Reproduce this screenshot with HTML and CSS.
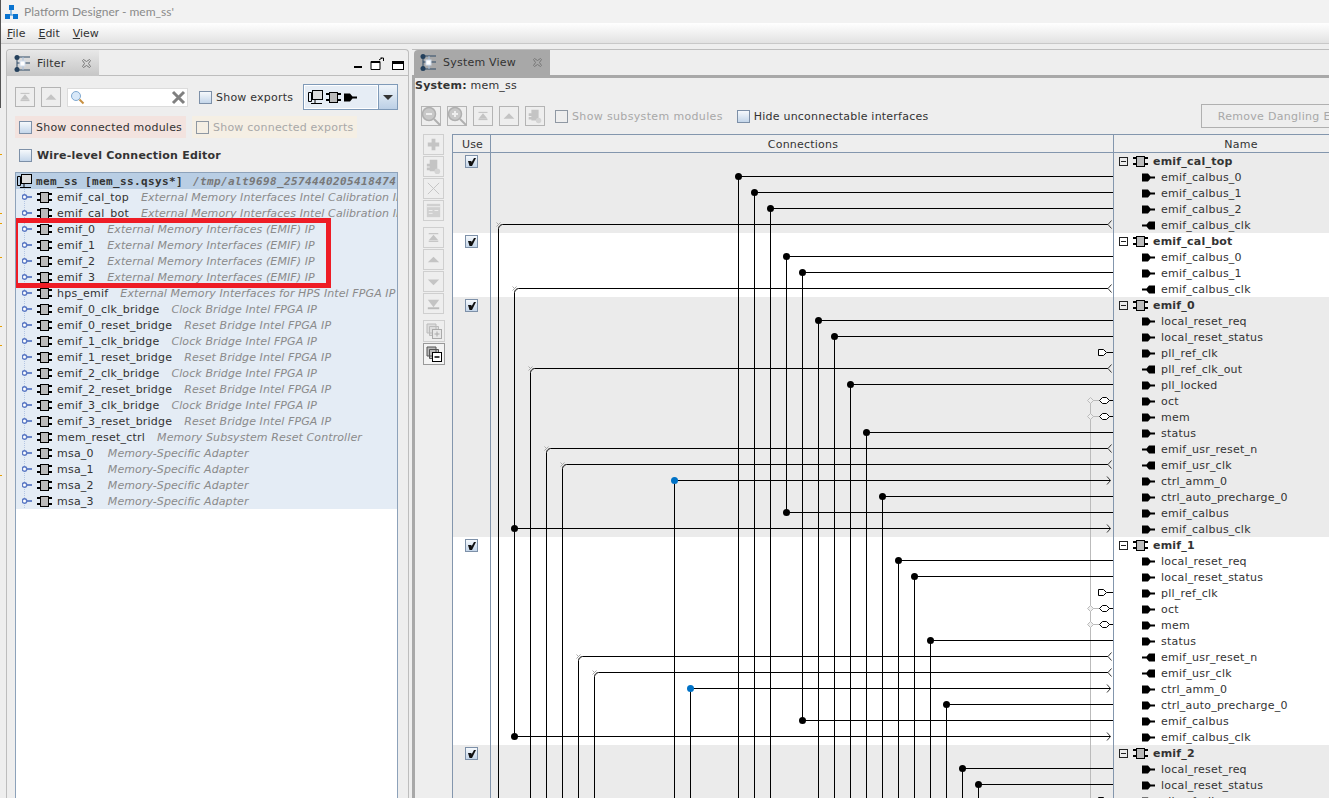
FILE: index.html
```html
<!DOCTYPE html>
<html lang="en">
<head>
  <meta charset="UTF-8" />
  <title>Platform Designer - mem_ss'</title>
  <link rel="stylesheet" href="styles.css">
</head>
<body>
  <svg class="defs" width="0" height="0">
    <symbol id="mod" viewBox="0 0 15 11">
      <path d="M0 2h4M0 8h4M11 2h4M11 8h4" stroke="#000" stroke-width="2"/>
      <rect x="3.500" y="0.500" width="8" height="10" fill="#bbb" stroke="#000"/>
    </symbol>
    <symbol id="pout" viewBox="0 0 13 9">
      <path d="M0 0.500h6l2.500 3h4.500v2h-4.500l-2.500 3h-6z" fill="#000"/>
    </symbol>
    <symbol id="pin" viewBox="0 0 13 9">
      <path d="M13 0.500h-6l-2.500 3h-4.500v2h4.500l2.500 3h6z" fill="#000"/>
    </symbol>
    <symbol id="conn" viewBox="0 0 16 16">
      <path d="M2.500 0v16" stroke="#b4c6e4" stroke-width="1" stroke-dasharray="1 1"/>
      <path d="M5 8h5" stroke="#6a86c8" stroke-width="2"/>
      <circle cx="2.500" cy="8" r="2.200" fill="#fff" stroke="#5a78c4" stroke-width="1.400"/>
    </symbol>
    <symbol id="minus" viewBox="0 0 9 9">
      <rect x="0.500" y="0.500" width="8" height="8" fill="none" stroke="#222"/>
      <path d="M2 4.500h5" stroke="#222"/>
    </symbol>
    <symbol id="tick" viewBox="0 0 11 11">
      <path d="M2 5h3.500v1.500l2.500-4.500h2l-4 8h-2.500z" fill="#111"/>
    </symbol>
    <symbol id="net" viewBox="0 0 17 17">
      <path d="M3 2v13M3 2h13M3 15h13M3 8h13M8 8v1" stroke="#2e4a66" fill="none"/>
      <path d="M9 2v13" stroke="#a9c0dc"/>
      <circle cx="3" cy="2.500" r="2.500" fill="#24405c"/>
      <circle cx="3" cy="14.500" r="2.500" fill="#24405c"/>
      <rect x="6" y="6" width="5" height="5" fill="#fff" stroke="#cfdcec"/>
    </symbol>
    <symbol id="cross" viewBox="0 0 11 11">
      <path d="M1.500 2.500l1-1 3 2 3-2 1 1-2 3 2 3-1 1-3-2-3 2-1-1 2-3z" fill="none" stroke="#777"/>
    </symbol>
    <symbol id="monitor" viewBox="0 0 15 15">
      <rect x="4.500" y="0.500" width="10" height="9" fill="#ddd" stroke="#000"/>
      <path d="M0.500 2.500h3v9h-3zM3 13.500h11M7 10v3" fill="none" stroke="#000"/>
    </symbol>
    <symbol id="glass" viewBox="0 0 20 20">
      <circle cx="8" cy="8" r="6.500" fill="#c8c8c8" stroke="#b0b0b0" stroke-width="1.500"/>
      <path d="M13 13l6 6" stroke="#b0b0b0" stroke-width="2"/>
      <path d="M5 8h6" stroke="#eee" stroke-width="2"/>
    </symbol>
    <symbol id="glassplus" viewBox="0 0 20 20">
      <circle cx="8" cy="8" r="6.500" fill="#c8c8c8" stroke="#b0b0b0" stroke-width="1.500"/>
      <path d="M13 13l6 6" stroke="#b0b0b0" stroke-width="2"/>
      <path d="M5 8h6M8 5v6" stroke="#eee" stroke-width="2"/>
    </symbol>
    <symbol id="top" viewBox="0 0 20 20">
      <path d="M5 6h10M5 14h10" stroke="#bbb"/>
      <path d="M10 7l5 6h-10z" fill="#c4c4c4"/>
    </symbol>
    <symbol id="up" viewBox="0 0 20 20">
      <path d="M10 7l6 6h-12z" fill="#c4c4c4"/>
    </symbol>
    <symbol id="down" viewBox="0 0 20 20">
      <path d="M10 14l-6-6h12z" fill="#c4c4c4"/>
    </symbol>
    <symbol id="bottom" viewBox="0 0 20 20">
      <path d="M4 15h12" stroke="#bbb" stroke-width="2"/>
      <path d="M10 14l-6-8h12z" fill="#c4c4c4"/>
    </symbol>
    <symbol id="chip" viewBox="0 0 20 20">
      <path d="M6 3h8v12h-8zM3 7h3v3h-3zM3 11h3v3h-3z" fill="#c4c4c4"/>
      <circle cx="14" cy="15" r="3" fill="#d4d4d4"/>
    </symbol>
    <symbol id="plus" viewBox="0 0 20 20">
      <path d="M10 4v12M4 10h12" stroke="#c4c4c4" stroke-width="4"/>
    </symbol>
    <symbol id="xthin" viewBox="0 0 20 20">
      <path d="M4 4l12 12M16 4l-12 12" stroke="#c4c4c4"/>
    </symbol>
    <symbol id="form" viewBox="0 0 20 20">
      <path d="M3 3h14v14h-14z" fill="#d0d0d0"/>
      <path d="M3 6h14M5 10h4M5 13h4M11 10h4" stroke="#eee"/>
    </symbol>
    <symbol id="stackplus" viewBox="0 0 20 20">
      <path d="M3 3h9v9h-9zM5.500 5.500h9v9h-9z" fill="#ddd" stroke="#bbb"/>
      <rect x="8.500" y="8.500" width="9" height="9" fill="#e8e8e8" stroke="#aaa"/>
      <path d="M10.500 13h5M13 10.500v5" stroke="#aaa"/>
    </symbol>
    <symbol id="stackminus" viewBox="0 0 20 20">
      <path d="M3 3h9v9h-9zM5.500 5.500h9v9h-9z" fill="#bbb" stroke="#555"/>
      <rect x="8.500" y="8.500" width="9" height="9" fill="#fff" stroke="#000"/>
      <path d="M10.500 13h5" stroke="#000" stroke-width="1.500"/>
    </symbol>
  </svg>

  <div class="edge"></div>
  <div class="edge-marks"></div>

  <header class="titlebar">
    <svg class="app-icon" width="16" height="14" viewBox="0 0 16 14">
      <path d="M7 4v6M2 10h12" stroke="#2d8ad8"/>
      <rect x="5" y="0" width="5" height="5" fill="#0a74d0"/>
      <rect x="1" y="9" width="5" height="5" fill="#0a74d0"/>
      <rect x="9" y="9" width="5" height="5" fill="#0a74d0"/>
    </svg>
    Platform Designer - mem_ss'
  </header>
  <nav class="menubar">
    <span><u>F</u>ile</span>
    <span><u>E</u>dit</span>
    <span><u>V</u>iew</span>
  </nav>

  <main class="workspace">
    <section class="filter-panel">
      <div class="tabstrip">
        <div class="tab">
          <svg width="17" height="17"><use href="#net"/></svg>
          <span>Filter</span>
          <svg class="tab-x" width="11" height="11"><use href="#cross"/></svg>
        </div>
        <div class="win-btns">
          <span class="win-min"></span>
          <svg width="15" height="13" viewBox="0 0 15 13"><path d="M1 4.500h9v8h-9zM1 5.500h9" fill="#fff" stroke="#000"/><path d="M9 3l3-2M10.500 1h3v3" fill="none" stroke="#000"/></svg>
          <span class="win-max"></span>
        </div>
      </div>

      <div class="filter-tools">
        <button class="tool"><svg width="18" height="18"><use href="#top"/></svg></button>
        <button class="tool"><svg width="18" height="18"><use href="#up"/></svg></button>
        <div class="search">
          <svg width="15" height="15" viewBox="0 0 15 15"><circle cx="6" cy="6" r="4.500" fill="#d8e8f8" stroke="#7fa8d0"/><path d="M9.500 9.500l4 4" stroke="#c89040" stroke-width="2"/></svg>
          <svg class="search-x" width="15" height="15" viewBox="0 0 15 15"><path d="M2 2l11 11M13 2l-11 11" stroke="#808080" stroke-width="3"/></svg>
        </div>
        <label class="opt opt-exports"><span class="check"></span>Show exports</label>
        <div class="combo">
          <div class="combo-value">
            <svg width="15" height="15"><use href="#monitor"/></svg>
            <svg width="15" height="11"><use href="#mod"/></svg>
            <svg width="13" height="9"><use href="#pout"/></svg>
          </div>
          <div class="combo-arrow"></div>
        </div>
      </div>

      <div class="chips">
        <label class="opt chip chip-modules"><span class="check"></span>Show connected modules</label>
        <label class="opt chip chip-exports off"><span class="check off"></span>Show connected exports</label>
      </div>

      <label class="opt wire-level"><span class="check"></span>Wire-level Connection Editor</label>

      <div class="tree">
        <div class="tree-root">
          <svg width="15" height="15"><use href="#monitor"/></svg>
          <b>mem_ss [mem_ss.qsys*]</b>
          <em>/tmp/alt9698_2574440205418474</em>
        </div>
        <ul class="tree-list">
          <li><svg class="c" width="16" height="16"><use href="#conn"/></svg><svg width="15" height="11"><use href="#mod"/></svg><span>emif_cal_top</span><i>External Memory Interfaces Intel Calibration IP</i></li>
          <li><svg class="c" width="16" height="16"><use href="#conn"/></svg><svg width="15" height="11"><use href="#mod"/></svg><span>emif_cal_bot</span><i>External Memory Interfaces Intel Calibration IP</i></li>
          <li><svg class="c" width="16" height="16"><use href="#conn"/></svg><svg width="15" height="11"><use href="#mod"/></svg><span>emif_0</span><i>External Memory Interfaces (EMIF) IP</i></li>
          <li><svg class="c" width="16" height="16"><use href="#conn"/></svg><svg width="15" height="11"><use href="#mod"/></svg><span>emif_1</span><i>External Memory Interfaces (EMIF) IP</i></li>
          <li><svg class="c" width="16" height="16"><use href="#conn"/></svg><svg width="15" height="11"><use href="#mod"/></svg><span>emif_2</span><i>External Memory Interfaces (EMIF) IP</i></li>
          <li><svg class="c" width="16" height="16"><use href="#conn"/></svg><svg width="15" height="11"><use href="#mod"/></svg><span>emif_3</span><i>External Memory Interfaces (EMIF) IP</i></li>
          <li><svg class="c" width="16" height="16"><use href="#conn"/></svg><svg width="15" height="11"><use href="#mod"/></svg><span>hps_emif</span><i>External Memory Interfaces for HPS Intel FPGA IP</i></li>
          <li><svg class="c" width="16" height="16"><use href="#conn"/></svg><svg width="15" height="11"><use href="#mod"/></svg><span>emif_0_clk_bridge</span><i>Clock Bridge Intel FPGA IP</i></li>
          <li><svg class="c" width="16" height="16"><use href="#conn"/></svg><svg width="15" height="11"><use href="#mod"/></svg><span>emif_0_reset_bridge</span><i>Reset Bridge Intel FPGA IP</i></li>
          <li><svg class="c" width="16" height="16"><use href="#conn"/></svg><svg width="15" height="11"><use href="#mod"/></svg><span>emif_1_clk_bridge</span><i>Clock Bridge Intel FPGA IP</i></li>
          <li><svg class="c" width="16" height="16"><use href="#conn"/></svg><svg width="15" height="11"><use href="#mod"/></svg><span>emif_1_reset_bridge</span><i>Reset Bridge Intel FPGA IP</i></li>
          <li><svg class="c" width="16" height="16"><use href="#conn"/></svg><svg width="15" height="11"><use href="#mod"/></svg><span>emif_2_clk_bridge</span><i>Clock Bridge Intel FPGA IP</i></li>
          <li><svg class="c" width="16" height="16"><use href="#conn"/></svg><svg width="15" height="11"><use href="#mod"/></svg><span>emif_2_reset_bridge</span><i>Reset Bridge Intel FPGA IP</i></li>
          <li><svg class="c" width="16" height="16"><use href="#conn"/></svg><svg width="15" height="11"><use href="#mod"/></svg><span>emif_3_clk_bridge</span><i>Clock Bridge Intel FPGA IP</i></li>
          <li><svg class="c" width="16" height="16"><use href="#conn"/></svg><svg width="15" height="11"><use href="#mod"/></svg><span>emif_3_reset_bridge</span><i>Reset Bridge Intel FPGA IP</i></li>
          <li><svg class="c" width="16" height="16"><use href="#conn"/></svg><svg width="15" height="11"><use href="#mod"/></svg><span>mem_reset_ctrl</span><i>Memory Subsystem Reset Controller</i></li>
          <li><svg class="c" width="16" height="16"><use href="#conn"/></svg><svg width="15" height="11"><use href="#mod"/></svg><span class="msa">msa_0</span><i>Memory-Specific Adapter</i></li>
          <li><svg class="c" width="16" height="16"><use href="#conn"/></svg><svg width="15" height="11"><use href="#mod"/></svg><span class="msa">msa_1</span><i>Memory-Specific Adapter</i></li>
          <li><svg class="c" width="16" height="16"><use href="#conn"/></svg><svg width="15" height="11"><use href="#mod"/></svg><span class="msa">msa_2</span><i>Memory-Specific Adapter</i></li>
          <li><svg class="c" width="16" height="16"><use href="#conn"/></svg><svg width="15" height="11"><use href="#mod"/></svg><span class="msa">msa_3</span><i>Memory-Specific Adapter</i></li>
        </ul>
        <div class="red-box"></div>
      </div>
    </section>

    <section class="system-panel">
      <div class="tabstrip-sys">
        <div class="tab-sys">
          <svg width="17" height="17"><use href="#net"/></svg>
          <span>System View</span>
          <svg class="tab-x" width="11" height="11"><use href="#cross"/></svg>
        </div>
      </div>
      <div class="system-body">
        <div class="system-name"><b>System:</b> mem_ss</div>
        <div class="sys-tools">
          <button class="tool"><svg width="20" height="20"><use href="#glass"/></svg></button>
          <button class="tool"><svg width="20" height="20"><use href="#glassplus"/></svg></button>
          <button class="tool"><svg width="18" height="18"><use href="#top"/></svg></button>
          <button class="tool"><svg width="18" height="18"><use href="#up"/></svg></button>
          <button class="tool"><svg width="18" height="18"><use href="#chip"/></svg></button>
          <label class="opt off opt-sub"><span class="check off"></span>Show subsystem modules</label>
          <label class="opt opt-hide"><span class="check"></span>Hide unconnectable interfaces</label>
          <button class="dangling">Remove Dangling Exports</button>
        </div>
        <div class="sys-main">
          <div class="side-tools">
            <button class="stool"><svg width="19" height="19"><use href="#plus"/></svg></button>
            <button class="stool"><svg width="19" height="19"><use href="#chip"/></svg></button>
            <button class="stool"><svg width="19" height="19"><use href="#xthin"/></svg></button>
            <button class="stool"><svg width="19" height="19"><use href="#form"/></svg></button>
            <button class="stool sep"><svg width="19" height="19"><use href="#top"/></svg></button>
            <button class="stool"><svg width="19" height="19"><use href="#up"/></svg></button>
            <button class="stool"><svg width="19" height="19"><use href="#down"/></svg></button>
            <button class="stool"><svg width="19" height="19"><use href="#bottom"/></svg></button>
            <button class="stool big sep"><svg width="20" height="20"><use href="#stackplus"/></svg></button>
            <button class="stool big active"><svg width="20" height="20"><use href="#stackminus"/></svg></button>
          </div>

          <div class="sys-table">
            <div class="sys-head">
              <div class="col-use">Use</div>
              <div class="col-conn">Connections</div>
              <div class="col-name">Name</div>
            </div>
            <div class="sys-rows">
              <div class="group grey">
                <div class="col-use"><span class="check"><svg width="11" height="11"><use href="#tick"/></svg></span></div>
                <div class="col-conn"></div>
                <ul class="col-name">
                  <li class="head"><svg width="9" height="9"><use href="#minus"/></svg><svg width="15" height="11"><use href="#mod"/></svg><b>emif_cal_top</b></li>
                  <li><svg width="13" height="9"><use href="#pout"/></svg>emif_calbus_0</li>
                  <li><svg width="13" height="9"><use href="#pout"/></svg>emif_calbus_1</li>
                  <li><svg width="13" height="9"><use href="#pout"/></svg>emif_calbus_2</li>
                  <li><svg width="13" height="9"><use href="#pin"/></svg>emif_calbus_clk</li>
                </ul>
              </div>
              <div class="group">
                <div class="col-use"><span class="check"><svg width="11" height="11"><use href="#tick"/></svg></span></div>
                <div class="col-conn"></div>
                <ul class="col-name">
                  <li class="head"><svg width="9" height="9"><use href="#minus"/></svg><svg width="15" height="11"><use href="#mod"/></svg><b>emif_cal_bot</b></li>
                  <li><svg width="13" height="9"><use href="#pout"/></svg>emif_calbus_0</li>
                  <li><svg width="13" height="9"><use href="#pout"/></svg>emif_calbus_1</li>
                  <li><svg width="13" height="9"><use href="#pin"/></svg>emif_calbus_clk</li>
                </ul>
              </div>
              <div class="group grey">
                <div class="col-use"><span class="check"><svg width="11" height="11"><use href="#tick"/></svg></span></div>
                <div class="col-conn"></div>
                <ul class="col-name">
                  <li class="head"><svg width="9" height="9"><use href="#minus"/></svg><svg width="15" height="11"><use href="#mod"/></svg><b>emif_0</b></li>
                  <li><svg width="13" height="9"><use href="#pout"/></svg>local_reset_req</li>
                  <li><svg width="13" height="9"><use href="#pout"/></svg>local_reset_status</li>
                  <li><svg width="13" height="9"><use href="#pout"/></svg>pll_ref_clk</li>
                  <li><svg width="13" height="9"><use href="#pin"/></svg>pll_ref_clk_out</li>
                  <li><svg width="13" height="9"><use href="#pout"/></svg>pll_locked</li>
                  <li><svg width="13" height="9"><use href="#pout"/></svg>oct</li>
                  <li><svg width="13" height="9"><use href="#pout"/></svg>mem</li>
                  <li><svg width="13" height="9"><use href="#pout"/></svg>status</li>
                  <li><svg width="13" height="9"><use href="#pin"/></svg>emif_usr_reset_n</li>
                  <li><svg width="13" height="9"><use href="#pin"/></svg>emif_usr_clk</li>
                  <li><svg width="13" height="9"><use href="#pout"/></svg>ctrl_amm_0</li>
                  <li><svg width="13" height="9"><use href="#pout"/></svg>ctrl_auto_precharge_0</li>
                  <li><svg width="13" height="9"><use href="#pout"/></svg>emif_calbus</li>
                  <li><svg width="13" height="9"><use href="#pout"/></svg>emif_calbus_clk</li>
                </ul>
              </div>
              <div class="group">
                <div class="col-use"><span class="check"><svg width="11" height="11"><use href="#tick"/></svg></span></div>
                <div class="col-conn"></div>
                <ul class="col-name">
                  <li class="head"><svg width="9" height="9"><use href="#minus"/></svg><svg width="15" height="11"><use href="#mod"/></svg><b>emif_1</b></li>
                  <li><svg width="13" height="9"><use href="#pout"/></svg>local_reset_req</li>
                  <li><svg width="13" height="9"><use href="#pout"/></svg>local_reset_status</li>
                  <li><svg width="13" height="9"><use href="#pout"/></svg>pll_ref_clk</li>
                  <li><svg width="13" height="9"><use href="#pout"/></svg>oct</li>
                  <li><svg width="13" height="9"><use href="#pout"/></svg>mem</li>
                  <li><svg width="13" height="9"><use href="#pout"/></svg>status</li>
                  <li><svg width="13" height="9"><use href="#pin"/></svg>emif_usr_reset_n</li>
                  <li><svg width="13" height="9"><use href="#pin"/></svg>emif_usr_clk</li>
                  <li><svg width="13" height="9"><use href="#pout"/></svg>ctrl_amm_0</li>
                  <li><svg width="13" height="9"><use href="#pout"/></svg>ctrl_auto_precharge_0</li>
                  <li><svg width="13" height="9"><use href="#pout"/></svg>emif_calbus</li>
                  <li><svg width="13" height="9"><use href="#pout"/></svg>emif_calbus_clk</li>
                </ul>
              </div>
              <div class="group grey">
                <div class="col-use"><span class="check"><svg width="11" height="11"><use href="#tick"/></svg></span></div>
                <div class="col-conn"></div>
                <ul class="col-name">
                  <li class="head"><svg width="9" height="9"><use href="#minus"/></svg><svg width="15" height="11"><use href="#mod"/></svg><b>emif_2</b></li>
                  <li><svg width="13" height="9"><use href="#pout"/></svg>local_reset_req</li>
                  <li><svg width="13" height="9"><use href="#pout"/></svg>local_reset_status</li>
                  <li><svg width="13" height="9"><use href="#pout"/></svg>pll_ref_clk</li>
                </ul>
              </div>

              <!-- wires: coordinates are the screen pixels of the canvas -->
              <svg class="wires" width="622" height="645" viewBox="491 153 622 645">
                <g fill="none" stroke="#bbb">
                  <path d="M1090.500 400.500V800M1090.500 400.500h9M1090.500 416.500h9M1090.500 608.500h9M1090.500 624.500h9"/>
                </g>
                <g fill="#eee" stroke="#bbb">
                  <path d="M1090.500 397.500l3 3-3 3-3-3zM1090.500 413.500l3 3-3 3-3-3zM1090.500 605.500l3 3-3 3-3-3zM1090.500 621.500l3 3-3 3-3-3z"/>
                </g>
                <g fill="none" stroke="#000">
                  <!-- plain drivers -->
                  <path d="M738.500 176.500H1113M738.500 176.500V798M754.500 192.500H1113M754.500 192.500V798M770.500 208.500H1113M770.500 208.500V798"/>
                  <path d="M786.500 256.500H1113M786.500 256.500V512.500H1113M802.500 272.500H1113M802.500 272.500V720.500H1113"/>
                  <path d="M818.500 320.500H1113M818.500 320.500V798M834.500 336.500H1113M834.500 336.500V798M850.500 384.500H1113M850.500 384.500V798M866.500 432.500H1113M866.500 432.500V798M882.500 496.500H1113M882.500 496.500V798"/>
                  <path d="M898.500 560.500H1113M898.500 560.500V798M914.500 576.500H1113M914.500 576.500V798M930.500 640.500H1113M930.500 640.500V798M946.500 704.500H1113M946.500 704.500V798M962.500 768.500H1113M962.500 768.500V798M978.500 784.500H1113M978.500 784.500V798"/>
                  <!-- clock and reset inputs with a rounded corner -->
                  <path d="M1108 224.500H502.500Q498.500 224.500 498.500 228.500V798M1108 288.500H518.500Q514.500 288.500 514.500 292.500V736.500H1110.500M514.500 528.500H1110.500"/>
                  <path d="M1108 368.500H534.500Q530.500 368.500 530.500 372.500V798M1108 448.500H550.500Q546.500 448.500 546.500 452.500V798M1108 464.500H566.500Q562.500 464.500 562.500 468.500V798M1108 656.500H582.500Q578.500 656.500 578.500 660.500V798M1108 672.500H598.500Q594.500 672.500 594.500 676.500V798"/>
                  <!-- avalon masters -->
                  <path d="M674.500 480.500H1110.500M674.500 480.500V798M690.500 688.500H1110.500M690.500 688.500V798"/>
                  <!-- arrow heads -->
                  <path stroke="#333" d="M1111.500 220.500l-3.500 4 3.500 4M1111.500 284.500l-3.500 4 3.500 4M1111.500 364.500l-3.500 4 3.500 4M1111.500 444.500l-3.500 4 3.500 4M1111.500 460.500l-3.500 4 3.500 4M1111.500 652.500l-3.500 4 3.500 4M1111.500 668.500l-3.500 4 3.500 4"/>
                  <path stroke="#333" d="M1107 476.500l3.500 4-3.500 4M1107 524.500l3.500 4-3.500 4M1107 684.500l3.500 4-3.500 4M1107 732.500l3.500 4-3.500 4"/>
                  <!-- exports -->
                  <path d="M1107 352.500H1113M1107 592.500H1113M1107 800.500H1113M1098.500 349.500h5l3 3-3 3h-5zM1098.500 589.500h5l3 3-3 3h-5zM1098.500 797.500h5l3 3-3 3h-5z" fill="#fff"/>
                  <path d="M1109 400.500H1113M1109 416.500H1113M1109 608.500H1113M1109 624.500H1113"/>
                  <path d="M1099.500 400.500l3-3h4l3 3-3 3h-4zM1099.500 416.500l3-3h4l3 3-3 3h-4zM1099.500 608.500l3-3h4l3 3-3 3h-4zM1099.500 624.500l3-3h4l3 3-3 3h-4z" fill="#fff"/>
                </g>
                <!-- small grey crosses on the corners -->
                <path fill="none" stroke="#aaa" d="M496.500 222.500l4 4m0-4l-4 4M512.500 286.500l4 4m0-4l-4 4M528.500 366.500l4 4m0-4l-4 4M544.500 446.500l4 4m0-4l-4 4M560.500 462.500l4 4m0-4l-4 4M576.500 654.500l4 4m0-4l-4 4M592.500 670.500l4 4m0-4l-4 4"/>
                <g fill="#000">
                  <circle cx="738.500" cy="176.500" r="3.500"/><circle cx="754.500" cy="192.500" r="3.500"/><circle cx="770.500" cy="208.500" r="3.500"/>
                  <circle cx="786.500" cy="256.500" r="3.500"/><circle cx="802.500" cy="272.500" r="3.500"/><circle cx="818.500" cy="320.500" r="3.500"/>
                  <circle cx="834.500" cy="336.500" r="3.500"/><circle cx="850.500" cy="384.500" r="3.500"/><circle cx="866.500" cy="432.500" r="3.500"/>
                  <circle cx="882.500" cy="496.500" r="3.500"/><circle cx="786.500" cy="512.500" r="3.500"/><circle cx="514.500" cy="528.500" r="3.500"/>
                  <circle cx="898.500" cy="560.500" r="3.500"/><circle cx="914.500" cy="576.500" r="3.500"/><circle cx="930.500" cy="640.500" r="3.500"/>
                  <circle cx="946.500" cy="704.500" r="3.500"/><circle cx="802.500" cy="720.500" r="3.500"/><circle cx="514.500" cy="736.500" r="3.500"/>
                  <circle cx="962.500" cy="768.500" r="3.500"/><circle cx="978.500" cy="784.500" r="3.500"/>
                </g>
                <g fill="#0072c6">
                  <circle cx="674.500" cy="480.500" r="3.500"/><circle cx="690.500" cy="688.500" r="3.500"/>
                </g>
              </svg>
            </div>
          </div>
        </div>
      </div>
    </section>
  </main>
</body>
</html>
```

FILE: styles.css
```css
* {
  box-sizing: border-box;
}

html, body {
  height: 100%;
}

body {
  margin: 0;
  overflow: hidden;
  display: flex;
  flex-direction: column;
  background-color: #eeeeee;
  color: #333;
  font-family: "DejaVu Sans", sans-serif;
  font-size: 11px;
  letter-spacing: 0.22px;
}

ul {
  list-style: none;
  margin: 0;
  padding: 0;
}

svg {
  flex: none;
  display: block;
}

.defs {
  position: absolute;
}

button {
  padding: 0;
  font-family: inherit;
}

/* bits of the window behind, at the very left edge */
.edge {
  position: absolute;
  left: 0;
  top: 0;
  width: 1px;
  height: 108px;
  background-color: #555;
}

.edge-marks {
  position: absolute;
  left: 0;
  top: 154px;
  width: 2px;
  height: 1px;
  background-color: #e8a000;
  box-shadow: 0 59px #e8a000, 0 69px #e8a000, 0 103px #e8a000, 0 172px #e8a000, 0 191px #e8a000, 0 321px #e8a000;
}

/* Title and menu */
.titlebar {
  height: 23px;
  flex: none;
  display: flex;
  align-items: center;
  gap: 4px;
  padding-left: 4px;
  background-color: #f2f2f2;
  color: #8a8a8a;
  font-family: Lato, sans-serif;
  font-size: 12px;
  letter-spacing: 0;
}

.menubar {
  height: 21px;
  flex: none;
  display: flex;
  align-items: center;
  gap: 13px;
  padding-left: 7px;
  background: linear-gradient(#ffffff, #e2e2e2);
  border-bottom: 1px solid #c8c8c8;
  letter-spacing: 0;
}

.workspace {
  flex: 1;
  min-height: 0;
  display: flex;
  padding: 5px 0 0 6px;
}

/* Filter panel, left side */
.filter-panel {
  width: 403px;
  flex: none;
  display: flex;
  flex-direction: column;
  border: 1px solid #bdbdbd;
  border-bottom: none;
  border-radius: 4px 4px 0 0;
}

.tabstrip {
  height: 26px;
  flex: none;
  display: flex;
  justify-content: space-between;
  border-bottom: 1px solid #bdbdbd;
}

.tab {
  width: 92px;
  height: 26px;
  display: flex;
  align-items: center;
  gap: 6px;
  padding-left: 7px;
  background: linear-gradient(#e8e8e8, #c6c6c6);
  border-radius: 4px 0 0 0;
}

.tab-x {
  margin-left: auto;
  margin-right: 7px;
}

.win-btns {
  display: flex;
  align-items: flex-end;
  gap: 7px;
  padding: 0 4px 5px 0;
}

.win-min {
  width: 8px;
  height: 2px;
  margin-bottom: 2px;
  margin-right: 1px;
  background-color: #000;
}

.win-max {
  width: 12px;
  height: 9px;
  border: 1px solid #000;
  border-top-width: 3px;
  background-color: #fff;
}

.filter-tools {
  height: 26px;
  flex: none;
  display: flex;
  align-items: center;
  margin: 8px 0 0 8px;
}

.tool {
  width: 20px;
  height: 20px;
  flex: none;
  display: flex;
  align-items: center;
  justify-content: center;
  margin-right: 6px;
  background: transparent;
  border: 1px solid #b4b4b4;
}

.search {
  width: 121px;
  height: 19px;
  display: flex;
  align-items: center;
  justify-content: space-between;
  padding: 0 1px 0 2px;
  background-color: #fff;
  border: 1px solid #dcdcdc;
}

.opt {
  display: flex;
  align-items: center;
  gap: 4px;
  white-space: nowrap;
}

.opt-exports {
  margin-left: 11px;
}

.check {
  width: 13px;
  height: 13px;
  flex: none;
  display: flex;
  align-items: center;
  justify-content: center;
  border: 1px solid #7d90a8;
  background: linear-gradient(#f6f9fc, #c4d6ea);
}

.check.off {
  background: transparent;
  border-color: #8f98a3;
}

.off {
  color: #a8a8a8;
}

.combo {
  width: 95px;
  height: 26px;
  margin-left: 10px;
  display: flex;
  border: 1px solid #7f9ab8;
}

.combo-value {
  flex: 1;
  display: flex;
  align-items: center;
  gap: 3px;
  padding-left: 3px;
  background-color: #e6edf5;
  border: 1px solid #fff;
}

.combo-arrow {
  width: 19px;
  position: relative;
  background: linear-gradient(#f0f5fa, #bcd0e6);
  border-left: 1px solid #7f9ab8;
}

.combo-arrow::after {
  content: "";
  position: absolute;
  left: 4px;
  top: 10px;
  border: 5px solid transparent;
  border-top: 5px solid #333;
  border-bottom: none;
}

.chips {
  display: flex;
  gap: 6px;
  margin: 6px 0 0 8px;
}

.chip {
  height: 22px;
  padding-left: 4px;
}

.chip-modules {
  width: 171px;
  background-color: #f3e3df;
}

.chip-exports {
  width: 165px;
  background-color: #f5efe4;
}

.wire-level {
  height: 18px;
  margin: 8px 0 0 12px;
  gap: 5px;
  font-weight: bold;
}

.tree {
  flex: 1;
  position: relative;
  margin: 8px 10px 0 8px;
  overflow: hidden;
  background-color: #fff;
  border: 1px solid #8da2ba;
  border-bottom: none;
}

.tree-root {
  height: 16px;
  display: flex;
  align-items: center;
  gap: 4px;
  padding-left: 1px;
  white-space: nowrap;
  background-color: #b9cee4;
  font-family: "DejaVu Sans Mono", monospace;
  letter-spacing: 0.38px;
}

.tree-root em {
  margin-left: 6px;
  font-weight: bold;
  color: #777;
}

.tree-list li {
  height: 16px;
  display: flex;
  align-items: center;
  white-space: nowrap;
  background-color: #e4ecf5;
}

.tree-list .c {
  margin: 0 -1px 0 6px;
}

.tree-list span {
  margin: 0 12px 0 5px;
}

.tree-list span.msa {
  margin-right: 14px;
}

.tree-list i {
  color: #8a8a8a;
  letter-spacing: 0.1px;
}

/* annotation drawn over the list */
.red-box {
  position: absolute;
  left: -3px;
  top: 45px;
  width: 318px;
  height: 70px;
  border: 5px solid #ee1c25;
}

/* System view, right side */
.system-panel {
  width: 960px;
  flex: none;
  margin-left: 3px;
  display: flex;
  flex-direction: column;
}

.tabstrip-sys {
  height: 29px;
  flex: none;
  padding-left: 2px;
  border-top: 1px solid #bdbdbd;
  border-bottom: 3px solid #a8a8a8;
}

.tab-sys {
  width: 136px;
  height: 25px;
  display: flex;
  align-items: center;
  gap: 6px;
  padding-left: 6px;
  background-color: #a8a8a8;
  border-radius: 4px 0 0 0;
}

.system-body {
  flex: 1;
  min-height: 0;
  display: flex;
  flex-direction: column;
  border-left: 3px solid #a8a8a8;
}

.system-name {
  height: 14px;
  margin-top: 1px;
  line-height: 14px;
  white-space: nowrap;
}

.sys-tools {
  height: 24px;
  flex: none;
  display: flex;
  align-items: center;
  margin: 11px 0 0 6px;
}

.opt-sub {
  margin-left: 4px;
  letter-spacing: 0.35px;
}

.opt-hide {
  margin-left: 14px;
}

.dangling {
  width: 183px;
  height: 24px;
  flex: none;
  margin-left: auto;
  margin-right: -12px;
  background: transparent;
  border: 1px solid #b0b0b0;
  color: #a8a8a8;
  font-size: 11px;
  letter-spacing: 0.3px;
  white-space: nowrap;
}

.sys-main {
  flex: 1;
  min-height: 0;
  display: flex;
  margin-top: 6px;
}

.side-tools {
  width: 37px;
  flex: none;
  display: flex;
  flex-direction: column;
  gap: 1px;
  padding-left: 8px;
}

.stool {
  width: 21px;
  height: 21px;
  display: flex;
  align-items: center;
  justify-content: center;
  background: transparent;
  border: 1px solid #cfcfcf;
}

.stool.sep {
  margin-top: 5px;
}

.stool.big {
  width: 22px;
  height: 22px;
}

.stool.active {
  background-color: #f4f4f4;
  border-color: #999;
}

.sys-table {
  flex: 1;
  min-height: 0;
  display: flex;
  flex-direction: column;
  overflow: hidden;
  border-left: 1px solid #8396ad;
  border-top: 1px solid #8396ad;
}

.sys-head {
  height: 18px;
  flex: none;
  display: flex;
  text-align: center;
  line-height: 18px;
  border-bottom: 1px solid #8396ad;
}

.sys-head div {
  padding: 1px 0 0 2px;
}

.col-use {
  width: 38px;
  flex: none;
  border-right: 1px solid #8396ad;
}

.col-conn {
  width: 623px;
  flex: none;
  border-right: 1px solid #8396ad;
}

.col-name {
  width: 252px;
  flex: none;
}

.sys-rows {
  flex: 1;
  min-height: 0;
  position: relative;
}

.group {
  display: flex;
  background-color: #fff;
}

.group.grey {
  background-color: #ebebeb;
}

.group .col-use {
  padding: 2px 0 0 12px;
}

.group .col-name li {
  height: 16px;
  display: flex;
  align-items: center;
  gap: 6px;
  padding-left: 28px;
  white-space: nowrap;
}

.group .col-name li.head {
  gap: 5px;
  padding-left: 5px;
}

/* canvas of the connection column */
.wires {
  position: absolute;
  left: 38px;
  top: 0;
}
```
